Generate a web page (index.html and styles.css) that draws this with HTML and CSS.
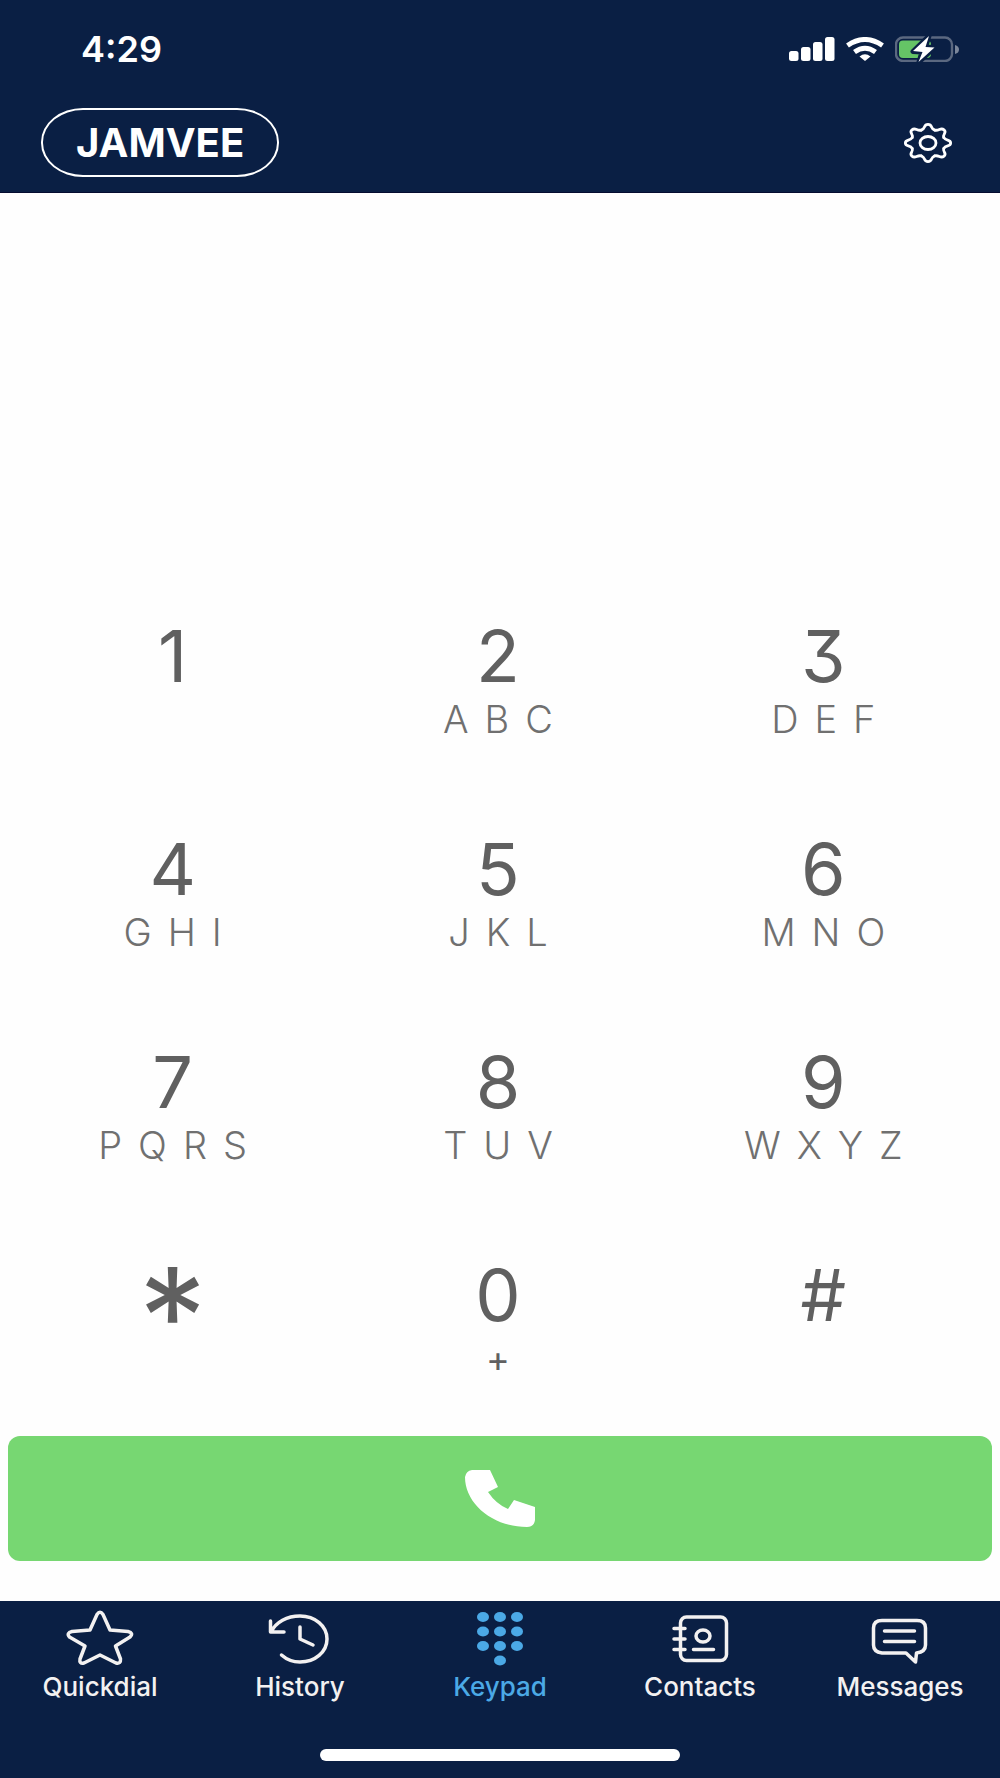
FILE: index.html
```html
<!DOCTYPE html>
<html lang="en">
<head>
<meta charset="utf-8">
<meta name="viewport" content="width=device-width, initial-scale=1">
<title>Jamvee Keypad</title>
<link rel="stylesheet" href="styles.css">
</head>
<body>
<header class="top">
  <div class="status">
    <span class="time">4:29</span>
    <div class="status-icons">
      <svg width="46" height="24" viewBox="0 0 46 24" fill="#fff" aria-label="Signal"><rect y="14" width="9.5" height="10" rx="2.5"/><rect x="12" y="10" width="9.5" height="14" rx="2.5"/><rect x="24" y="5" width="9.5" height="19" rx="2.5"/><rect x="36" width="9.5" height="24" rx="2.5"/></svg>
      <svg width="38" height="24" viewBox="0 0 38 24" aria-label="Wi-Fi"><g fill="none" stroke="#fff" stroke-width="5"><path d="M1.5 8.5Q19-3.5 36.5 8.5"/><path d="M8.5 15Q19 7.5 29.5 15"/></g><path d="M13.5 19.5Q19 15 24.5 19.5L19 24Z" fill="#fff"/></svg>
      <svg width="64" height="26" viewBox="0 0 64 26" aria-label="Battery charging"><rect x="1" y="1.5" width="56" height="23.5" rx="7" fill="none" stroke="#5b6880" stroke-width="2.4"/><path d="M60 9q4 1 4 4.5t-4 4.5z" fill="#7c879b"/><rect x="4" y="4.5" width="32" height="17.5" rx="4" fill="#65c466"/><path d="M34 0L18 15.5L27 16L24 26L39.5 11.5L30.5 11Z" fill="#fff" stroke="#0a1f44" stroke-width="5" stroke-linejoin="round"/><path d="M34 0L18 15L27.5 16L23.5 26L39.5 11.5L30.5 11Z" fill="#fff"/></svg>
    </div>
  </div>
  <div class="bar">
    <button class="brand" type="button">JAMVEE</button>
    <button class="settings" type="button" aria-label="Settings">
      <svg width="50" height="42" viewBox="-25 -21 50 42" fill="none" stroke="#fff" stroke-width="2.8" stroke-linecap="round">
        <defs><path id="tooth" vector-effect="non-scaling-stroke" d="M-29.5-71.200C-10-80-22-102 0-102C22-102 10-80 29.500-71.200"/></defs>
        <g transform="scale(.222 .182)"><use href="#tooth"/><use href="#tooth" transform="rotate(45)"/><use href="#tooth" transform="rotate(90)"/><use href="#tooth" transform="rotate(135)"/><use href="#tooth" transform="rotate(180)"/><use href="#tooth" transform="rotate(225)"/><use href="#tooth" transform="rotate(270)"/><use href="#tooth" transform="rotate(315)"/></g>
        <ellipse rx="8" ry="6.5"/>
      </svg>
    </button>
  </div>
</header>
<main class="dialer">
  <div class="keys">
    <button class="key" type="button"><span class="digit">1</span></button>
    <button class="key" type="button"><span class="digit">2</span><span class="letters">ABC</span></button>
    <button class="key" type="button"><span class="digit">3</span><span class="letters">DEF</span></button>
    <button class="key" type="button"><span class="digit">4</span><span class="letters">GHI</span></button>
    <button class="key" type="button"><span class="digit">5</span><span class="letters">JKL</span></button>
    <button class="key" type="button"><span class="digit">6</span><span class="letters">MNO</span></button>
    <button class="key" type="button"><span class="digit">7</span><span class="letters">PQRS</span></button>
    <button class="key" type="button"><span class="digit">8</span><span class="letters">TUV</span></button>
    <button class="key" type="button"><span class="digit">9</span><span class="letters">WXYZ</span></button>
    <button class="key" type="button"><span class="star">*</span></button>
    <button class="key" type="button"><span class="digit">0</span><span class="plus">+</span></button>
    <button class="key" type="button"><span class="digit">#</span></button>
  </div>
  <button class="call" type="button" aria-label="Call">
    <svg width="70" height="57" viewBox="0 0 70 57" fill="#fff"><path d="M7 0H25L33 17L23 22Q31 34 43 39L49 30L70 37V50Q69 57 62 57C28 57 0 34 0 7Q1 1 7 0Z"/></svg>
  </button>
</main>
<footer class="bottom">
  <nav class="tabs">
    <a class="tab" href="#quickdial"><svg class="icon" viewBox="0 0 72 60"><path d="M33 6.5Q36 2 39 6.5L46 22L64 23.5Q70 25 66 29L51.5 38L56.5 51Q57 56 52 55L36 47L20 55Q15 56 16 51L21 38L5.5 29Q2 25 8 23.5L26 22Z"/></svg>Quickdial</a>
    <a class="tab" href="#history"><svg class="icon" viewBox="0 0 72 60"><path d="M6.5 13V24H20M7 24C12 14 23 8 36 8C51 8 63 18 63 31C63 44 51 54 36 54C29 54 22 51 17.5 47M36 19V31L49 37"/></svg>History</a>
    <a class="tab active" href="#keypad" aria-current="page"><svg class="icon dots" viewBox="0 0 72 60"><ellipse cx="19" cy="9" rx="6" ry="5"/><ellipse cx="36" cy="9" rx="6" ry="5"/><ellipse cx="53" cy="9" rx="6" ry="5"/><ellipse cx="19" cy="23.5" rx="6" ry="5"/><ellipse cx="36" cy="23.5" rx="6" ry="5"/><ellipse cx="53" cy="23.5" rx="6" ry="5"/><ellipse cx="19" cy="38" rx="6" ry="5"/><ellipse cx="36" cy="38" rx="6" ry="5"/><ellipse cx="53" cy="38" rx="6" ry="5"/><ellipse cx="36" cy="52.5" rx="6" ry="5"/></svg>Keypad</a>
    <a class="tab" href="#contacts"><svg class="icon" viewBox="0 0 72 60"><rect x="16.5" y="9" width="46" height="43.5" rx="6"/><ellipse cx="39" cy="28" rx="7" ry="6"/><path d="M10 20.5H21M10 31H21M10 41.5H21M29.5 41.5H49.5"/></svg>Contacts</a>
    <a class="tab" href="#messages"><svg class="icon" viewBox="0 0 72 60"><path d="M18 12.5H53Q61.5 12.5 61.5 20V37Q61.5 44 52.5 45L51.5 54L42 45H18Q9.5 44 9.5 37V20Q9.5 12.5 18 12.5ZM20.5 23H50.5M20.5 33.5H50.5"/></svg>Messages</a>
  </nav>
  <div class="home"></div>
</footer>
</body>
</html>
```
FILE: styles.css
```css
* { box-sizing: border-box; }

body {
  margin: 0;
  min-height: 100vh;
  display: flex;
  flex-direction: column;
  background: #fefefe;
  font-family: Inter, "Liberation Sans", sans-serif;
}

button {
  margin: 0;
  padding: 0;
  border: 0;
  background: none;
  color: inherit;
  font: inherit;
}

svg { display: block; }

.top {
  background: #0a1f44;
  color: #fff;
  padding-bottom: 15px;
  border-bottom: 1px solid #050c30;
}

.status {
  height: 98px;
  padding: 0 41px 0 81px;
  display: flex;
  align-items: center;
  justify-content: space-between;
}

.time {
  font-size: 36px;
  line-height: 44px;
  font-weight: 600;
}

.status-icons {
  display: flex;
  align-items: center;
  gap: 11px;
}

.bar {
  padding: 10px 47px 0 41px;
  display: flex;
  align-items: center;
  justify-content: space-between;
}

.brand {
  height: 69px;
  padding: 0 33px;
  border: 2px solid #fff;
  border-radius: 42px / 34px;
  font-size: 40px;
  line-height: 48px;
  font-weight: 700;
}

.dialer {
  flex: 1;
  display: flex;
  flex-direction: column;
  justify-content: flex-end;
  padding: 0 8px 40px;
}

.keys {
  display: grid;
  grid-template-columns: repeat(3, 1fr);
  grid-auto-rows: 213px;
  padding: 0 6px 0 2px;
}

.key {
  padding-top: 28px;
  display: flex;
  flex-direction: column;
  align-items: center;
  justify-content: flex-start;
  color: #606060;
}

.digit {
  font-size: 72px;
  line-height: 88px;
  font-feature-settings: "cv09";
}

.star {
  font-size: 136px;
  line-height: 132px;
}

.letters {
  padding-left: 16px;
  font-size: 38px;
  line-height: 38px;
  letter-spacing: 16px;
  font-weight: 300;
  color: #707070;
}

.plus {
  font-size: 36px;
  line-height: 40px;
}

.call {
  height: 125px;
  border-radius: 12px;
  background: #77d772;
  display: flex;
  align-items: center;
  justify-content: center;
}

.bottom {
  background: #0a1f44;
  padding: 7px 0 17px;
}

.tabs {
  display: grid;
  grid-template-columns: repeat(5, 1fr);
}

.tab {
  display: flex;
  flex-direction: column;
  align-items: center;
  gap: 5px;
  color: #f3f1f1;
  font-size: 26px;
  line-height: 28px;
  font-weight: 500;
  text-decoration: none;
}

.tab.active { color: #4ba9e6; }

.icon {
  width: 72px;
  height: 60px;
  fill: none;
  stroke: currentColor;
  stroke-width: 3.5;
  stroke-linecap: round;
  stroke-linejoin: round;
}

.dots {
  fill: currentColor;
  stroke: none;
}

.home {
  width: 36%;
  height: 12px;
  margin: 48px auto 0;
  border-radius: 6px;
  background: #fff;
}
```
